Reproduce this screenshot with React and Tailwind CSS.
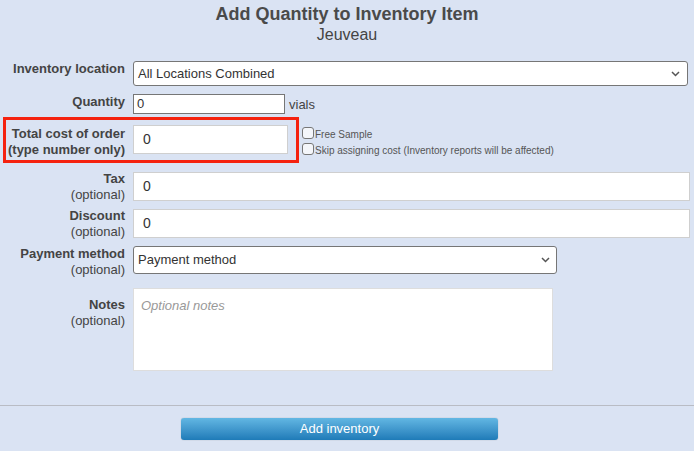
import React from "react";

function Chevron() {
  return (
    <svg width="9" height="6" viewBox="0 0 9 6" className="shrink-0">
      <path d="M1 1l3.5 3.5L8 1" fill="none" stroke="#555" strokeWidth="1.5" />
    </svg>
  );
}

function Label({ title, sub, className = "" }) {
  return (
    <div className={"w-[125px] shrink-0 text-right text-[13px] leading-[16px] text-[#444] " + className}>
      <div className="font-bold">{title}</div>
      {sub && <div>{sub}</div>}
    </div>
  );
}

export default function App() {
  return (
    <div
      className="w-[694px] h-[451px] bg-[#dae3f3] text-[#444] overflow-hidden"
      style={{ fontFamily: '"Liberation Sans", Arial, sans-serif' }}
    >
      <div className="pt-[3px] text-center">
        <div className="text-[18px] font-bold leading-[22px] text-[#4a4a4a]">Add Quantity to Inventory Item</div>
        <div className="text-[16px] leading-[20px] text-[#444]">Jeuveau</div>
      </div>

      <div className="mt-[16px] flex flex-col">
        {/* Inventory location */}
        <div className="flex items-start gap-[8px] h-[25px]">
          <Label title="Inventory location" />
          <div className="w-[555px] h-[25px] bg-white border border-[#767676] rounded-[3px] flex items-center justify-between pl-[4px] pr-[7px] text-[13px] text-[#333]">
            <span>All Locations Combined</span>
            <Chevron />
          </div>
        </div>

        {/* Quantity */}
        <div className="mt-[8px] flex items-start gap-[8px] h-[20px]">
          <Label title="Quantity" />
          <div className="w-[152px] h-[20px] bg-white border border-[#767676] flex items-center pl-[3px] text-[13px] text-[#333]">0</div>
          <span className="-ml-[4px] pt-[3px] text-[13px] leading-[16px] text-[#444]">vials</span>
        </div>

        {/* Total cost */}
        <div className="mt-[3px] flex items-start h-[46px]">
          <div className="ml-[3px] w-[296px] h-[46px] border-[3px] border-[#f5220f] flex items-start gap-[8px] pt-[5px]">
            <div className="w-[119px] shrink-0 text-right text-[13px] leading-[16px] font-bold text-[#444] pt-[1px]">
              <div>Total cost of order</div>
              <div>(type number only)</div>
            </div>
            <div className="w-[155px] h-[29px] bg-white border border-[#cfcfcf] flex items-center pl-[9px] text-[14px] text-[#333]">0</div>
          </div>
          <div className="ml-[3px] pt-[8px] flex flex-col text-[10px] leading-[16px] text-[#555]">
            <label className="flex items-center">
              <span className="w-[12px] h-[12px] border border-[#777] rounded-[3px] bg-[#f4f6fa]" />
              <span className="ml-[1px] translate-y-[2px]">Free Sample</span>
            </label>
            <label className="flex items-center">
              <span className="w-[12px] h-[12px] border border-[#777] rounded-[3px] bg-[#f4f6fa]" />
              <span className="ml-[1px] translate-y-[2px]">Skip assigning cost (Inventory reports will be affected)</span>
            </label>
          </div>
        </div>

        {/* Tax */}
        <div className="mt-[9px] flex items-start gap-[8px] h-[29px]">
          <Label title="Tax" sub="(optional)" className="-mt-[1px]" />
          <div className="w-[557px] h-[29px] bg-white border border-[#cfcfcf] flex items-center pl-[9px] text-[14px] text-[#333]">0</div>
        </div>

        {/* Discount */}
        <div className="mt-[8px] flex items-start gap-[8px] h-[29px]">
          <Label title="Discount" sub="(optional)" className="-mt-[1px]" />
          <div className="w-[557px] h-[29px] bg-white border border-[#cfcfcf] flex items-center pl-[9px] text-[14px] text-[#333]">0</div>
        </div>

        {/* Payment method */}
        <div className="mt-[8px] flex items-start gap-[8px] h-[28px]">
          <Label title="Payment method" sub="(optional)" />
          <div className="w-[424px] h-[28px] bg-white border border-[#767676] rounded-[3px] flex items-center justify-between pl-[4px] pr-[6px] text-[13px] text-[#333]">
            <span>Payment method</span>
            <Chevron />
          </div>
        </div>

        {/* Notes */}
        <div className="mt-[14px] flex items-start gap-[8px] h-[83px]">
          <Label title="Notes" sub="(optional)" className="pt-[9px]" />
          <div className="w-[420px] h-[83px] bg-white border border-[#dddddd] pl-[7px] pt-[9px] text-[13px] leading-[16px] italic text-[#999]">
            Optional notes
          </div>
        </div>
      </div>

      <div className="mt-[34px] border-t border-[#b9bcc4]" />

      <div className="mt-[12px] flex justify-center pr-[15px]">
        <div className="w-[317px] h-[22px] rounded-[3px] bg-gradient-to-b from-[#62b7e3] to-[#1e7bb8] shadow-[0_0_1px_rgba(0,0,0,0.4)] flex items-center justify-center text-[13px] text-white">
          Add inventory
        </div>
      </div>
    </div>
  );
}
